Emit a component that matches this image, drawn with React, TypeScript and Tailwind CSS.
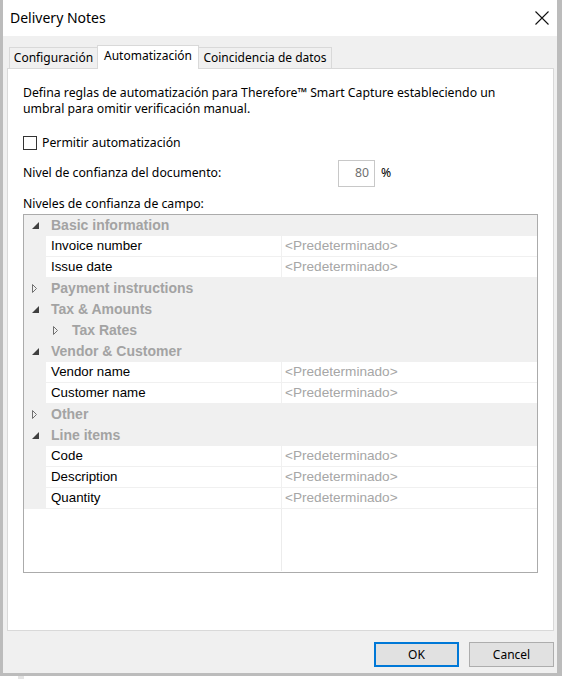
import React from "react";

type Row = { kind: "group" | "field"; label: string; open?: boolean; level?: number };

const rows: Row[] = [
  { kind: "group", label: "Basic information", open: true },
  { kind: "field", label: "Invoice number" },
  { kind: "field", label: "Issue date" },
  { kind: "group", label: "Payment instructions", open: false },
  { kind: "group", label: "Tax & Amounts", open: true },
  { kind: "group", label: "Tax Rates", open: false, level: 1 },
  { kind: "group", label: "Vendor & Customer", open: true },
  { kind: "field", label: "Vendor name" },
  { kind: "field", label: "Customer name" },
  { kind: "group", label: "Other", open: false },
  { kind: "group", label: "Line items", open: true },
  { kind: "field", label: "Code" },
  { kind: "field", label: "Description" },
  { kind: "field", label: "Quantity" },
];

const Arrow = ({ open }: { open?: boolean }) =>
  open ? (
    <svg width="7" height="7" viewBox="0 0 7 7">
      <polygon points="7,0 7,7 0,7" fill="#404040" />
    </svg>
  ) : (
    <svg width="6" height="9" viewBox="0 0 6 9">
      <polygon points="0.5,0.5 4.5,4.5 0.5,8.5" fill="none" stroke="#707070" strokeWidth="1" />
    </svg>
  );

const App = () => {
  return (
    <div className="w-[562px] h-[679px] bg-white font-['Noto_Sans',sans-serif] text-[12px] text-black">
      <div className="w-[562px] h-[676px] flex flex-col border-l-[3px] border-r-[5px] border-b-[3px] border-[#bcbcbc]">
        {/* title bar */}
        <div className="h-[36px] bg-white flex items-center justify-between pl-[7px] pr-[8px]">
          <span className="text-[14px] leading-none">Delivery Notes</span>
          <svg width="14" height="14" viewBox="0 0 14 14">
            <path d="M0.5 0.5 L13.5 13.5 M13.5 0.5 L0.5 13.5" stroke="#111" strokeWidth="1.1" />
          </svg>
        </div>

        <div className="flex-1 bg-[#f0f0f0] flex flex-col pt-[9px]">
          {/* tabs */}
          <div className="h-[23px] flex items-end pl-[6px]">
            <div className="w-[88px] h-[21px] border-l border-t border-[#d9d9d9] flex items-center justify-center pb-px">
              Configuración
            </div>
            <div className="relative z-10 -mb-px w-[102px] h-[24px] bg-white border-l border-t border-r border-[#d9d9d9] flex justify-center pt-[1px]">
              Automatización
            </div>
            <div className="w-[133px] h-[21px] border-t border-r border-[#d9d9d9] flex items-center justify-center pb-px">
              Coincidencia de datos
            </div>
          </div>

          {/* panel */}
          <div className="ml-[4px] mr-[3px] h-[563px] bg-white border border-[#d9d9d9] px-[15px] pt-[16px] pb-[57px] flex flex-col text-[12.25px]">
            <p className="leading-[16px]">
              Defina reglas de automatización para Therefore™ Smart Capture estableciendo un
              <br />
              umbral para omitir verificación manual.
            </p>

            <div className="mt-[18px] h-[16px] flex items-center">
              <div className="w-[14px] h-[14px] border border-[#333333] bg-white" />
              <span className="ml-[5px]">Permitir automatización</span>
            </div>

            <div className="mt-[9px] flex items-center">
              <span className="w-[315px]">Nivel de confianza del documento:</span>
              <div className="w-[37px] h-[27px] border border-[#c8c8c8] flex items-center justify-end pr-[5px] text-[#707070]">
                80
              </div>
              <span className="ml-[6px]">%</span>
            </div>

            <div className="mt-[9px] leading-[16px]">Niveles de confianza de campo:</div>

            {/* field tree */}
            <div className="mt-[2px] flex-1 border border-[#ababab] bg-white flex flex-col font-['Liberation_Sans',Arial,sans-serif] text-[13.3px]">
              {rows.map((r, i) =>
                r.kind === "group" ? (
                  <div
                    key={i}
                    className={`h-[21px] shrink-0 bg-[#f0f0f0] flex items-center ${r.level ? "pl-[29px]" : "pl-[8px]"}`}
                  >
                    <div className="w-[19px] flex items-center">
                      <Arrow open={r.open} />
                    </div>
                    <span className="font-bold text-[14px] text-[#a3a3a3]">{r.label}</span>
                  </div>
                ) : (
                  <div key={i} className="h-[21px] shrink-0 flex">
                    <div className="w-[22px] bg-[#f0f0f0]" />
                    <div className="w-[236px] bg-white border-b border-r border-[#f0f0f0] pl-[5px] flex items-center">
                      {r.label}
                    </div>
                    <div className="flex-1 bg-white border-b border-[#f0f0f0] pl-[3px] flex items-center text-[13.6px] text-[#a6a6a6]">
                      &lt;Predeterminado&gt;
                    </div>
                  </div>
                )
              )}
              <div className="flex-1 flex">
                <div className="w-[258px] border-r border-[#ececec] mb-[1px]" />
                <div className="flex-1" />
              </div>
            </div>
          </div>

          {/* footer */}
          <div className="flex justify-end gap-[10px] pr-[3px] mt-[11px]">
            <button className="w-[85px] h-[25px] bg-[#e1e1e1] border-2 border-[#0078d7]">OK</button>
            <button className="w-[85px] h-[25px] bg-[#e1e1e1] border border-[#adadad]">Cancel</button>
          </div>
        </div>
      </div>
      <div className="ml-[18px] w-[6px] h-[3px] bg-[#e4e4e4]" />
    </div>
  );
};

export default App;
